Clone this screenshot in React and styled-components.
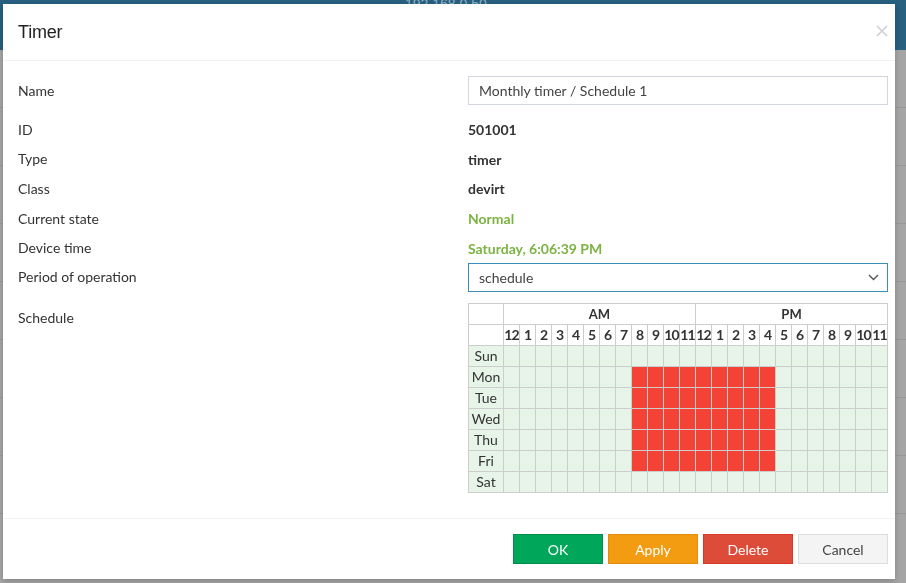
import React from 'react'
import styled, { createGlobalStyle } from 'styled-components'

const GlobalStyle = createGlobalStyle`
    html, body {
        margin: 0;
        padding: 0;
        height: 100%;
    }
    body {
        background: #a2a2a2;
        font-family: Lato, "Open Sans", sans-serif;
        color: #333;
        overflow: hidden;
    }
`

const hours = ['12', '1', '2', '3', '4', '5', '6', '7', '8', '9', '10', '11']
const days = ['Sun', 'Mon', 'Tue', 'Wed', 'Thu', 'Fri', 'Sat']

// Mon-Fri, 8 AM to 4 PM
const isOn = (day, hour) => day >= 1 && day <= 5 && hour >= 8 && hour <= 16

const App = () => {
    return (
        <>
            <GlobalStyle />
            <Page>
                <TopBar>192.168.0.50</TopBar>
                <Backdrop>
                    {Array.from({ length: 8 }).map((_, i) => <BackRow key={i} />)}
                </Backdrop>
            </Page>
            <Modal>
                <Header>
                    <Title>Timer</Title>
                    <Close aria-label="close">
                        <svg width="12" height="12" viewBox="0 0 12 12">
                            <path d="M1 1 L11 11 M11 1 L1 11" stroke="#cfcfcf" strokeWidth="1.6" />
                        </svg>
                    </Close>
                </Header>
                <Body>
                    <FieldRow>
                        <Label>Name</Label>
                        <Input defaultValue="Monthly timer / Schedule 1" />
                    </FieldRow>
                    <InfoRow>
                        <Label>ID</Label>
                        <Value>501001</Value>
                    </InfoRow>
                    <InfoRow>
                        <Label>Type</Label>
                        <Value>timer</Value>
                    </InfoRow>
                    <InfoRow>
                        <Label>Class</Label>
                        <Value>devirt</Value>
                    </InfoRow>
                    <InfoRow>
                        <Label>Current state</Label>
                        <Value $ok>Normal</Value>
                    </InfoRow>
                    <InfoRow>
                        <Label>Device time</Label>
                        <Value $ok>Saturday, 6:06:39 PM</Value>
                    </InfoRow>
                    <FieldRow $last>
                        <Label>Period of operation</Label>
                        <Select>
                            <span>schedule</span>
                            <svg width="11" height="7" viewBox="0 0 11 7">
                                <path d="M1 1 L5.5 5.5 L10 1" fill="none" stroke="#555" strokeWidth="1.4" />
                            </svg>
                        </Select>
                    </FieldRow>
                    <ScheduleRow>
                        <Label $top>Schedule</Label>
                        <Grid>
                            <HeadCell />
                            <HeadCell $span={12}>AM</HeadCell>
                            <HeadCell $span={12}>PM</HeadCell>
                            <HeadCell />
                            {[...hours, ...hours].map((h, i) => (
                                <HourCell key={i}>{h}</HourCell>
                            ))}
                            {days.map((d, di) => (
                                <React.Fragment key={d}>
                                    <DayCell>{d}</DayCell>
                                    {Array.from({ length: 24 }).map((_, hi) => (
                                        <Slot key={hi} $on={isOn(di, hi)} />
                                    ))}
                                </React.Fragment>
                            ))}
                        </Grid>
                    </ScheduleRow>
                </Body>
                <Footer>
                    <Button $variant="ok">OK</Button>
                    <Button $variant="apply">Apply</Button>
                    <Button $variant="delete">Delete</Button>
                    <Button $variant="cancel">Cancel</Button>
                </Footer>
            </Modal>
        </>
    )
}

export default App


const Page = styled.div`
    width: 100%;
    height: 100vh;
    display: flex;
    flex-direction: column;
`

const TopBar = styled.div`
    height: 50px;
    background: #28607f;
    color: #8fb1c5;
    font-family: "Liberation Sans", Arial, sans-serif;
    font-size: 14px;
    line-height: 8px;
    padding-left: 405px;
`

const Backdrop = styled.div`
    flex: 1;
    display: flex;
    flex-direction: column;
    background: #a5a5a5;
`

const BackRow = styled.div`
    height: 57px;
    border-bottom: 1px solid #979797;
`

const Modal = styled.div`
    position: fixed;
    top: 4px;
    left: 3px;
    width: 892px;
    height: 575px;
    background: #fff;
    display: flex;
    flex-direction: column;
    box-shadow: 0 2px 6px rgba(0,0,0,0.2);
`

const Header = styled.div`
    height: 56px;
    padding: 0 6px 0 15px;
    display: flex;
    align-items: center;
    justify-content: space-between;
    border-bottom: 1px solid #f2f2f2;
`

const Title = styled.h4`
    margin: 0;
    font-family: "Liberation Sans", Arial, sans-serif;
    font-weight: normal;
    font-size: 18px;
    color: #222;
    letter-spacing: -0.2px;
`

const Close = styled.button`
    border: none;
    background: transparent;
    padding: 0;
    width: 14px;
    height: 14px;
    margin-top: -3px;
    display: flex;
    align-items: center;
    justify-content: center;
    cursor: pointer;
`

const Body = styled.div`
    flex: 1;
    padding: 15px 8px 0 15px;
    display: flex;
    flex-direction: column;
`

const FieldRow = styled.div`
    display: grid;
    grid-template-columns: 450px 1fr;
    align-items: center;
    height: 29px;
    margin-bottom: ${p => p.$last ? '0' : '10px'};
`

const InfoRow = styled.div`
    display: grid;
    grid-template-columns: 450px 1fr;
    align-items: center;
    height: 29.6px;
`

const ScheduleRow = styled.div`
    display: grid;
    grid-template-columns: 450px 1fr;
    align-items: start;
    margin-top: 11px;
`

const Label = styled.div`
    font-size: 14px;
    color: #333;
    padding-top: ${p => p.$top ? '6px' : '0'};
    margin-top: ${p => p.$top ? '0' : '-1px'};
`

const Value = styled.div`
    font-size: 14px;
    font-weight: bold;
    color: ${p => p.$ok ? '#7cb342' : '#333'};
`

const Input = styled.input`
    box-sizing: border-box;
    width: 420px;
    height: 29px;
    border: 1px solid #d2d6de;
    padding: 0 10px;
    font-family: Lato, "Open Sans", sans-serif;
    font-size: 14px;
    color: #444;
    outline: none;
`

const Select = styled.div`
    box-sizing: border-box;
    width: 420px;
    height: 29px;
    border: 1px solid #3c8dbc;
    padding: 0 8px 0 10px;
    display: flex;
    align-items: center;
    justify-content: space-between;
    font-size: 14px;
    color: #444;
`

const Grid = styled.div`
    width: 420px;
    box-sizing: border-box;
    display: grid;
    grid-template-columns: 34px repeat(24, 15px);
    grid-auto-rows: 20px;
    gap: 1px;
    padding: 1px;
    background: #cdcdcd;
`

const HeadCell = styled.div`
    grid-column: span ${p => p.$span || 1};
    background: #fff;
    display: flex;
    align-items: center;
    justify-content: center;
    font-size: 13px;
    font-weight: bold;
    color: #333;
`

const HourCell = styled.div`
    background: #fff;
    display: flex;
    align-items: center;
    justify-content: center;
    font-size: 14px;
    font-weight: bold;
    color: #333;
    letter-spacing: -0.9px;
    white-space: nowrap;
`

const DayCell = styled.div`
    background: #e7f4e8;
    display: flex;
    align-items: center;
    justify-content: center;
    font-size: 14px;
    color: #333;
`

const Slot = styled.div`
    background: ${p => p.$on ? '#f44336' : '#e7f4e8'};
`

const buttonColors = {
    ok: { bg: '#00a65a', border: '#008d4c', color: '#fff' },
    apply: { bg: '#f39c12', border: '#e08e0b', color: '#fff' },
    delete: { bg: '#dd4b39', border: '#d73925', color: '#fff' },
    cancel: { bg: '#f4f4f4', border: '#ddd', color: '#444' },
}

const Footer = styled.div`
    border-top: 1px solid #f2f2f2;
    padding: 15px 7px 15px 15px;
    display: flex;
    justify-content: flex-end;
    gap: 5px;
`

const Button = styled.button`
    width: 90px;
    height: 30px;
    border: 1px solid ${p => buttonColors[p.$variant].border};
    background: ${p => buttonColors[p.$variant].bg};
    color: ${p => buttonColors[p.$variant].color};
    font-family: Lato, "Open Sans", sans-serif;
    font-size: 14px;
    cursor: pointer;
`
